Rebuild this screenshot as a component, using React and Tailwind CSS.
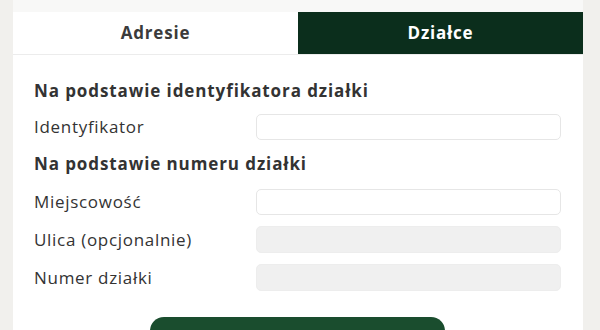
export default function App() {
  const font = { fontFamily: '"Open Sans", "Noto Sans", sans-serif' };

  return (
    <div className="h-[330px] w-[600px] overflow-hidden bg-[#f1f0ed] text-[#333333]" style={font}>
      <div className="ml-[13px] w-[570px]">
        {/* strip of the section above */}
        <div className="h-[12px] bg-[#f8f8f7]" />

        <div className="bg-white">
          {/* Tabs */}
          <div className="grid grid-cols-2 h-[43px] border-b border-[#ececec]">
            <button className="flex items-center justify-center text-[17px] font-bold tracking-[0.8px] text-[#3b3b3b] bg-white">
              Adresie
            </button>
            <button className="flex items-center justify-center text-[17px] font-bold tracking-[0.8px] text-white bg-[#0b2e1c]">
              Działce
            </button>
          </div>

          {/* Form */}
          <div className="pl-[21px] pr-[22px] pt-[24px] pb-[20px]">
            <h3 className="text-[17px] leading-[24px] font-bold tracking-[0.9px] text-[#333]">
              Na podstawie identyfikatora działki
            </h3>

            <div className="mt-[11px] flex items-center">
              <label className="w-[222px] text-[17px] leading-[24px] tracking-[0.7px]">Identyfikator</label>
              <input className="flex-1 h-[26px] rounded-[5px] border border-[#e6e6e6] bg-white" />
            </div>

            <h3 className="mt-[12px] text-[17px] leading-[24px] font-bold tracking-[0.9px] text-[#333]">
              Na podstawie numeru działki
            </h3>

            <div className="mt-[13px] flex flex-col gap-[11px]">
              <div className="flex items-center">
                <label className="w-[222px] text-[17px] leading-[24px] tracking-[0.7px]">Miejscowość</label>
                <input className="flex-1 h-[26px] rounded-[5px] border border-[#e6e6e6] bg-white" />
              </div>
              <div className="flex items-center">
                <label className="w-[222px] text-[17px] leading-[24px] tracking-[0.7px]">Ulica (opcjonalnie)</label>
                <input disabled className="flex-1 h-[27px] rounded-[5px] border border-[#ededed] bg-[#f0f0f0]" />
              </div>
              <div className="flex items-center">
                <label className="w-[222px] text-[17px] leading-[24px] tracking-[0.7px]">Numer działki</label>
                <input disabled className="flex-1 h-[27px] rounded-[5px] border border-[#ededed] bg-[#f0f0f0]" />
              </div>
            </div>

            <div className="mt-[26px] flex justify-center">
              <button className="w-[295px] h-[46px] rounded-[14px] bg-[#1a4d2e] text-white text-[17px] font-bold tracking-[0.8px]">
                Szukaj
              </button>
            </div>
          </div>
        </div>
      </div>
    </div>
  );
}
